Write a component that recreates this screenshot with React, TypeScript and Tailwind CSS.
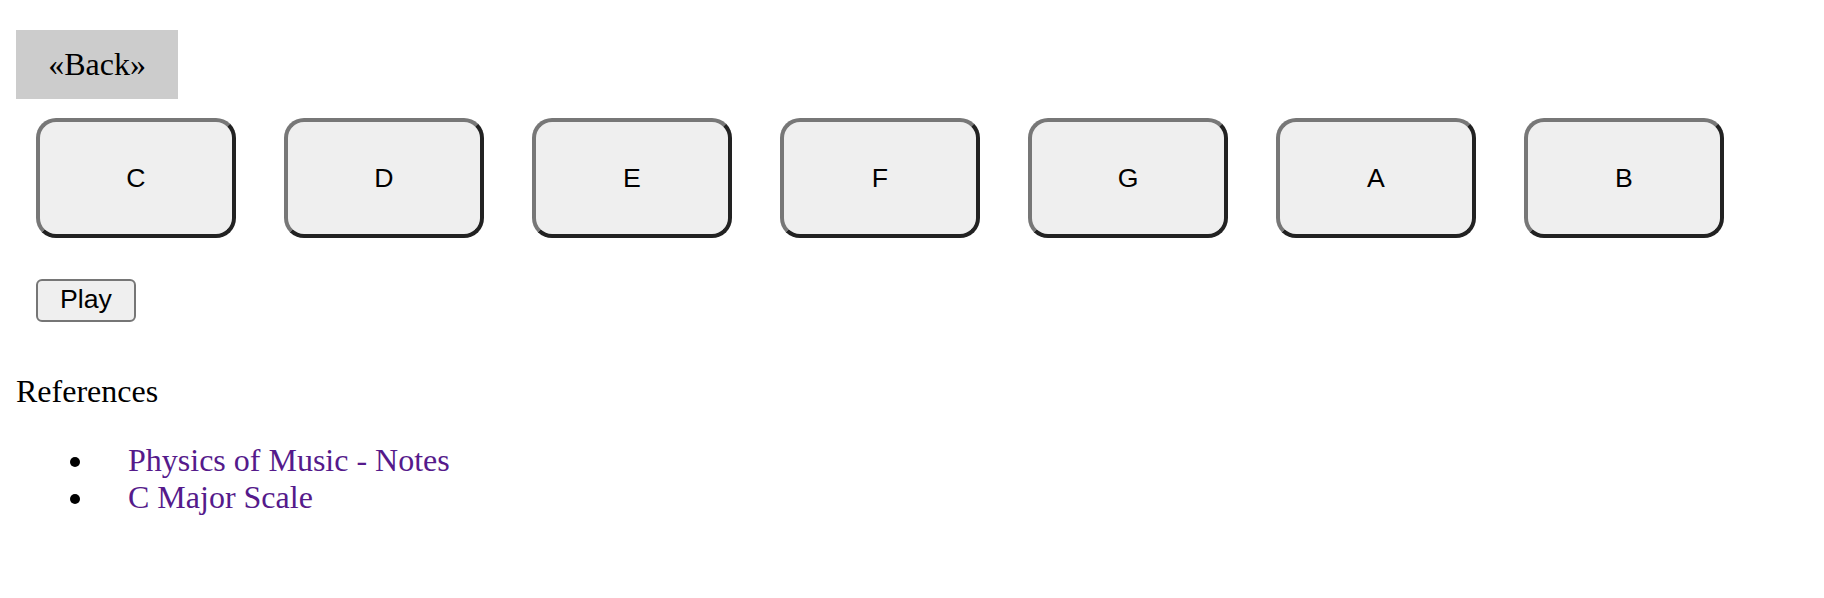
const notes = ["C", "D", "E", "F", "G", "A", "B"];

const references = [
  { name: "Physics of Music - Notes", href: "#notes" },
  { name: "C Major Scale", href: "#c-major" },
];

export default function App() {
  return (
    <div className="min-h-screen bg-white px-4 pt-[30px] font-['Liberation_Serif',serif] text-[32px] leading-[36.8px] text-black">
      {/* back link */}
      <div className="flex h-[69px] w-[162px] items-center justify-center bg-[#cccccc]">«Back»</div>

      {/* note keys */}
      <div className="mt-[19px] flex gap-[48px] pl-5">
        {notes.map((note) => (
          <button
            key={note}
            className="flex h-[120px] w-[200px] items-center justify-center rounded-[20px] border-4 border-t-[#777777] border-l-[#777777] border-b-[#222222] border-r-[#222222] bg-[#efefef] font-['Liberation_Sans',sans-serif] text-[26.67px] text-black"
          >
            {note}
          </button>
        ))}
      </div>

      <button className="ml-5 mt-[41px] flex h-[43px] w-[100px] items-center justify-center rounded-[6px] border-2 border-[#767676] bg-[#efefef] pb-[2px] font-['Liberation_Sans',sans-serif] text-[26.67px] leading-none text-black">
        Play
      </button>

      <p className="mt-[51px]">References</p>

      <ul className="mt-8 list-disc pl-[80px]">
        {references.map((ref) => (
          <li key={ref.name}>
            <a href={ref.href} className="pl-[32px] text-[#551a8b] no-underline">
              {ref.name}
            </a>
          </li>
        ))}
      </ul>
    </div>
  );
}
